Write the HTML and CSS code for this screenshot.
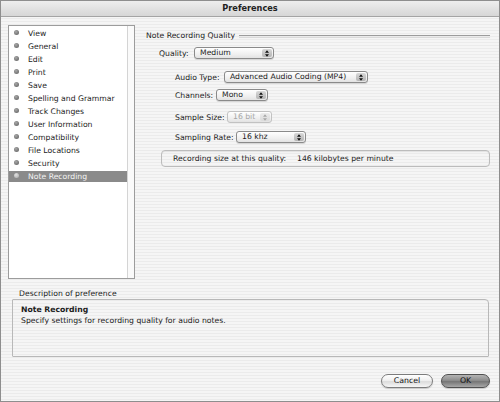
FILE: index.html
```html
<!DOCTYPE html>
<html>
<head>
<meta charset="utf-8">
<title>Preferences</title>
<link rel="stylesheet" href="styles.css">
</head>
<body>
<div class="window">
  <div class="titlebar">Preferences</div>
  <div class="main">
    <div class="sidebar">
      <ul class="list">
        <li><span class="dot"></span>View</li>
        <li><span class="dot"></span>General</li>
        <li><span class="dot"></span>Edit</li>
        <li><span class="dot"></span>Print</li>
        <li><span class="dot"></span>Save</li>
        <li><span class="dot"></span>Spelling and Grammar</li>
        <li><span class="dot"></span>Track Changes</li>
        <li><span class="dot"></span>User Information</li>
        <li><span class="dot"></span>Compatibility</li>
        <li><span class="dot"></span>File Locations</li>
        <li><span class="dot"></span>Security</li>
        <li class="selected"><span class="dot"></span>Note Recording</li>
      </ul>
      <div class="track"></div>
    </div>
    <div class="content">
      <div class="group-head"><span class="group-title">Note Recording Quality</span><span class="rule"></span></div>

      <div class="row row-quality">
        <span class="label lw-quality">Quality:</span>
        <div class="popup pw-quality"><span class="val">Medium</span><span class="arrows"><svg width="5" height="8" viewBox="0 0 5 8"><path d="M2.5 0 L5 3 L0 3 Z M0 5 L5 5 L2.5 8 Z" fill="#111"/></svg></span></div>
      </div>

      <div class="row row-audio">
        <span class="label lw-audio">Audio Type:</span>
        <div class="popup pw-audio"><span class="val">Advanced Audio Coding (MP4)</span><span class="arrows"><svg width="5" height="8" viewBox="0 0 5 8"><path d="M2.5 0 L5 3 L0 3 Z M0 5 L5 5 L2.5 8 Z" fill="#111"/></svg></span></div>
      </div>

      <div class="row row-channels">
        <span class="label lw-channels">Channels:</span>
        <div class="popup pw-channels"><span class="val">Mono</span><span class="arrows"><svg width="5" height="8" viewBox="0 0 5 8"><path d="M2.5 0 L5 3 L0 3 Z M0 5 L5 5 L2.5 8 Z" fill="#111"/></svg></span></div>
      </div>

      <div class="row row-size">
        <span class="label lw-size">Sample Size:</span>
        <div class="popup disabled pw-size"><span class="val">16 bit</span><span class="arrows"><svg width="5" height="8" viewBox="0 0 5 8"><path d="M2.5 0 L5 3 L0 3 Z M0 5 L5 5 L2.5 8 Z" fill="#a8a8a8"/></svg></span></div>
      </div>

      <div class="row row-rate">
        <span class="label lw-rate">Sampling Rate:</span>
        <div class="popup pw-rate"><span class="val">16 khz</span><span class="arrows"><svg width="5" height="8" viewBox="0 0 5 8"><path d="M2.5 0 L5 3 L0 3 Z M0 5 L5 5 L2.5 8 Z" fill="#111"/></svg></span></div>
      </div>

      <div class="info"><span class="info-label">Recording size at this quality:</span><span class="info-val">146 kilobytes per minute</span></div>
    </div>
  </div>

  <div class="desc">
    <div class="desc-label">Description of preference</div>
    <div class="desc-box">
      <div class="desc-title">Note Recording</div>
      <div class="desc-text">Specify settings for recording quality for audio notes.</div>
    </div>
  </div>

  <div class="buttons">
    <button class="btn btn-cancel">Cancel</button>
    <button class="btn btn-ok">OK</button>
  </div>
</div>
</body>
</html>
```

FILE: styles.css
```css
html, body {
  margin: 0;
  padding: 0;
  width: 500px;
  height: 402px;
  overflow: hidden;
  background: #fff;
}

body {
  font-family: "DejaVu Sans", "Liberation Sans", sans-serif;
  font-size: 7.7px;
  color: #1c1c1c;
}

.window {
  box-sizing: border-box;
  width: 500px;
  height: 402px;
  border: 1px solid #8e8e8e;
  background: repeating-linear-gradient(to bottom, #f5f5f5 0, #f5f5f5 2px, #ebebeb 2px, #ebebeb 3px);
  display: flex;
  flex-direction: column;
}

.titlebar {
  height: 15px;
  border-bottom: 1px solid #a4a4a4;
  background: linear-gradient(to bottom, #eeeeee, #d6d6d6);
  text-align: center;
  font-weight: bold;
  font-size: 8.2px;
  line-height: 14px;
  color: #222;
}

.main {
  display: flex;
  padding: 8px 9px 0 7px;
}

.sidebar {
  box-sizing: border-box;
  width: 127px;
  height: 254px;
  border: 1px solid #9c9c9c;
  background: #fff;
  display: flex;
}

.list {
  list-style: none;
  margin: 0;
  padding: 1px 0 0 0;
  width: 118px;
  border-right: 1px solid #d4d4d4;
}

.list li {
  height: 13px;
  line-height: 13px;
  display: flex;
  align-items: center;
  white-space: nowrap;
}

.dot {
  width: 5px;
  height: 5px;
  border-radius: 50%;
  background: radial-gradient(circle at 40% 35%, #a8a8a8, #5a5a5a);
  margin: -2px 9px 0 5px;
  flex: none;
}

.list li.selected {
  background: #8a8a8a;
  color: #f4f4f4;
  height: 11px;
  margin-top: 1px;
  margin-bottom: 1px;
}

.list li.selected .dot {
  background: radial-gradient(circle at 40% 35%, #e0e0e0, #a8a8a8);
}

.track {
  flex: 1;
  background: #fafafa;
}

.content {
  flex: 1;
  margin-left: 11px;
  display: flex;
  flex-direction: column;
}

.group-head {
  margin-top: 4px;
  height: 12px;
  display: flex;
  align-items: center;
}

.group-title {
  white-space: nowrap;
  margin-right: 4px;
}

.rule {
  flex: 1;
  height: 1px;
  border-top: 1px solid #9c9c9c;
  border-bottom: 1px solid #dadada;
  margin-top: 2px;
}

.row {
  display: flex;
  align-items: center;
  height: 12px;
  padding-left: 29px;
}

.row-quality { margin-top: 6px; padding-left: 13px; }
.row-audio { margin-top: 12px; }
.row-channels { margin-top: 6px; }
.row-size { margin-top: 10px; }
.row-rate { margin-top: 8px; }

.label {
  white-space: nowrap;
  flex: none;
}

.lw-quality { width: 35px; }
.lw-audio { width: 49px; }
.lw-channels { width: 41px; }
.lw-size { width: 52px; }
.lw-rate { width: 61px; }

.popup {
  box-sizing: border-box;
  height: 12px;
  border: 1px solid #8a8a8a;
  border-radius: 3px;
  background: linear-gradient(to bottom, #ffffff, #f0f0f0 60%, #e2e2e2);
  box-shadow: 0 1px 0 rgba(0, 0, 0, 0.12);
  display: flex;
  align-items: center;
  flex: none;
  overflow: hidden;
}

.pw-quality { width: 80px; }
.pw-audio { width: 144px; }
.pw-channels { width: 52px; }
.pw-size { width: 45px; }
.pw-rate { width: 70px; }

.popup .val {
  flex: 1;
  padding-left: 5px;
  white-space: nowrap;
  line-height: 10px;
}

.popup .arrows {
  width: 10px;
  height: 8px;
  margin-right: 1px;
  border-radius: 2px;
  background: linear-gradient(to bottom, #d8d8d8, #b4b4b4);
  display: flex;
  align-items: center;
  justify-content: center;
}

.popup .arrows svg {
  width: 4px;
  height: 7px;
}

.popup.disabled {
  border-color: #c2c2c2;
  box-shadow: none;
}

.popup.disabled .val {
  color: #a6a6a6;
}

.popup.disabled .arrows {
  background: linear-gradient(to bottom, #ececec, #dadada);
}

.info {
  box-sizing: border-box;
  margin-top: 7px;
  margin-left: 15px;
  height: 17px;
  border: 1px solid #bcbcbc;
  border-radius: 4px;
  box-shadow: inset 0 1px 1px rgba(0, 0, 0, 0.08);
  display: flex;
  align-items: center;
  padding-left: 11px;
  white-space: nowrap;
}

.info-label {
  width: 124px;
}

.desc {
  margin: 10px 10px 0 11px;
}

.desc-label {
  line-height: 10px;
  height: 10px;
  padding-left: 7px;
}

.desc-box {
  box-sizing: border-box;
  height: 58px;
  border: 1px solid #b8b8b8;
  border-radius: 1px 4px 1px 1px;
  padding: 4px 8px;
}

.desc-title {
  font-weight: bold;
  line-height: 11px;
}

.desc-text {
  line-height: 12px;
}

.buttons {
  display: flex;
  justify-content: flex-end;
  gap: 8px;
  margin-top: 17px;
  padding-right: 9px;
}

.btn {
  box-sizing: border-box;
  height: 14px;
  border-radius: 7px;
  border: 1px solid #7c7c7c;
  font-family: "DejaVu Sans", "Liberation Sans", sans-serif;
  font-size: 7.8px;
  color: #111;
  padding: 0;
  line-height: 12px;
  box-shadow: 0 1px 1px rgba(0, 0, 0, 0.18);
}

.btn-cancel {
  width: 52px;
  background: linear-gradient(to bottom, #ffffff, #f0f0f0 45%, #dcdcdc 55%, #f6f6f6);
}

.btn-ok {
  width: 49px;
  border-color: #505050;
  background: linear-gradient(to bottom, #b4b4b4, #8e8e8e 45%, #767676 55%, #a8a8a8);
}
```
